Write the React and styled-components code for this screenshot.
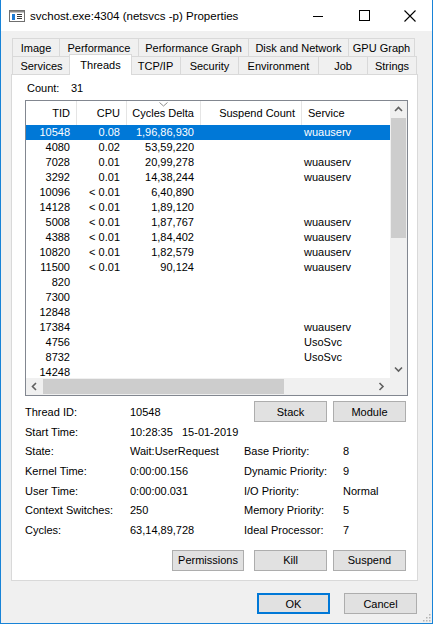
import React from 'react'
import styled, { createGlobalStyle, css } from 'styled-components'

const Global = createGlobalStyle`
  body {
    margin: 0;
    background: #fff;
  }
`

const topTabs = [
  { label: 'Image', w: 47 },
  { label: 'Performance', w: 79 },
  { label: 'Performance Graph', w: 110 },
  { label: 'Disk and Network', w: 100 },
  { label: 'GPU Graph', w: 67 },
]

const bottomTabs = [
  { label: 'Services', w: 58 },
  { label: 'Threads', w: 60, active: true },
  { label: 'TCP/IP', w: 50 },
  { label: 'Security', w: 58 },
  { label: 'Environment', w: 80 },
  { label: 'Job', w: 49 },
  { label: 'Strings', w: 50 },
]

const columns = [
  { label: 'TID', w: 51, align: 'right' },
  { label: 'CPU', w: 50, align: 'right' },
  { label: 'Cycles Delta', w: 74, align: 'right', sorted: true },
  { label: 'Suspend Count', w: 101, align: 'right' },
  { label: 'Service', w: 88, align: 'left' },
]

const threads = [
  ['10548', '0.08', '1,96,86,930', '', 'wuauserv'],
  ['4080', '0.02', '53,59,220', '', ''],
  ['7028', '0.01', '20,99,278', '', 'wuauserv'],
  ['3292', '0.01', '14,38,244', '', 'wuauserv'],
  ['10096', '< 0.01', '6,40,890', '', ''],
  ['14128', '< 0.01', '1,89,120', '', ''],
  ['5008', '< 0.01', '1,87,767', '', 'wuauserv'],
  ['4388', '< 0.01', '1,84,402', '', 'wuauserv'],
  ['10820', '< 0.01', '1,82,579', '', 'wuauserv'],
  ['11500', '< 0.01', '90,124', '', 'wuauserv'],
  ['820', '', '', '', ''],
  ['7300', '', '', '', ''],
  ['12848', '', '', '', ''],
  ['17384', '', '', '', 'wuauserv'],
  ['4756', '', '', '', 'UsoSvc'],
  ['8732', '', '', '', 'UsoSvc'],
  ['14248', '', '', '', ''],
]

const details = [
  ['State:', 'Wait:UserRequest', 'Base Priority:', '8'],
  ['Kernel Time:', '0:00:00.156', 'Dynamic Priority:', '9'],
  ['User Time:', '0:00:00.031', 'I/O Priority:', 'Normal'],
  ['Context Switches:', '250', 'Memory Priority:', '5'],
  ['Cycles:', '63,14,89,728', 'Ideal Processor:', '7'],
]

const gridTemplate = columns.map(c => `${c.w}px`).join(' ')

const Window = styled.div`
  position: relative;
  width: 433px;
  height: 624px;
  box-sizing: border-box;
  border: 1px solid #1883d7;
  border-top: none;
  display: flex;
  flex-direction: column;
  background: #f0f0f0;
  font-family: "Liberation Sans", Arial, sans-serif;
  font-size: 11px;
  color: #000;
  overflow: hidden;
`

const TitleBar = styled.div`
  height: 31px;
  flex: none;
  background: #fff;
  display: flex;
  align-items: center;
  padding-left: 8px;
`

const Title = styled.span`
  margin-left: 5px;
  font-size: 11.5px;
  flex: 1;
  white-space: nowrap;
`

const Caption = styled.div`
  width: ${p => p.$w || 46}px;
  height: 31px;
  display: flex;
  align-items: center;
  justify-content: center;
`

const Body = styled.div`
  flex: 1;
  display: flex;
  flex-direction: column;
  padding: 7px 14px 9px 10px;
`

const TabRow = styled.div`
  display: flex;
  height: 18px;
  padding-left: 1px;
`

const Tab = styled.div`
  box-sizing: border-box;
  width: ${p => p.$w}px;
  height: 18px;
  flex: none;
  border-top: 1px solid #d9d9d9;
  border-left: 1px solid #d9d9d9;
  background: #f0f0f0;
  display: flex;
  align-items: center;
  justify-content: center;
  white-space: nowrap;
  &:last-child {
    border-right: 1px solid #d9d9d9;
  }
  ${p => p.$active && css`
    position: relative;
    z-index: 1;
    width: ${p.$w + 3}px;
    height: 21px;
    margin: -2px -2px 0 -1px;
    background: #fff;
    border-right: 1px solid #d9d9d9;
  `}
`

const Panel = styled.div`
  box-sizing: border-box;
  height: 507px;
  flex: none;
  background: #fff;
  border: 1px solid #d9d9d9;
  display: flex;
  flex-direction: column;
  padding: 7px 9px 0 13px;
`

const CountRow = styled.div`
  display: flex;
  height: 13px;
  line-height: 13px;
  margin: 0 0 5px 2px;
`

const CountLabel = styled.span`
  width: 44px;
`

const ListBox = styled.div`
  box-sizing: border-box;
  height: 296px;
  border: 1px solid #828790;
  display: grid;
  grid-template-columns: 1fr 17px;
  grid-template-rows: 1fr 17px;
`

const ListContent = styled.div`
  overflow: hidden;
  background: #fff;
`

const HeaderRow = styled.div`
  display: grid;
  grid-template-columns: ${gridTemplate};
  height: 24px;
`

const HeaderCell = styled.div`
  position: relative;
  box-sizing: border-box;
  display: flex;
  align-items: center;
  justify-content: ${p => (p.$align === 'right' ? 'flex-end' : 'flex-start')};
  padding: ${p => (p.$align === 'right' ? '0 6px 0 0' : '0 0 0 6px')};
  border-right: 1px solid #e5e5e5;
  white-space: nowrap;
  &:last-child {
    border-right: none;
  }
`

const SortMark = styled.svg`
  position: absolute;
  top: 1px;
  left: 32px;
`

const Row = styled.div`
  display: grid;
  grid-template-columns: ${gridTemplate};
  height: 15px;
  line-height: 15px;
  ${p => p.$selected && css`
    background: #0078d7;
    color: #fff;
  `}
`

const Cell = styled.div`
  box-sizing: border-box;
  text-align: ${p => p.$align};
  padding: ${p => (p.$align === 'right' ? '0 7px 0 0' : '0 0 0 2px')};
  white-space: nowrap;
  overflow: hidden;
`

const VScroll = styled.div`
  display: flex;
  flex-direction: column;
  background: #f0f0f0;
`

const HScroll = styled.div`
  display: flex;
  background: #f0f0f0;
`

const Arrow = styled.div`
  width: 17px;
  height: 17px;
  flex: none;
  display: flex;
  align-items: center;
  justify-content: center;
`

const VThumb = styled.div`
  height: 120px;
  margin: 0 1px;
  background: #cdcdcd;
`

const HThumb = styled.div`
  width: 241px;
  margin: 1px 0;
  background: #cdcdcd;
`

const Spacer = styled.div`
  flex: 1;
`

const Corner = styled.div`
  background: #f0f0f0;
`

const DetailGrid = styled.div`
  display: grid;
  grid-template-columns: 105px 114px 99px 1fr;
  grid-auto-rows: 19.7px;
  align-items: center;
  margin-top: 6px;
  padding-right: 2px;
`

const Text = styled.div`
  white-space: nowrap;
`

const ButtonGroup = styled.div`
  grid-column: 3 / 5;
  display: flex;
  justify-content: flex-end;
  gap: 6px;
`

const Button = styled.div`
  box-sizing: border-box;
  width: ${p => p.$w || 73}px;
  height: 21px;
  flex: none;
  background: #e1e1e1;
  border: 1px solid #adadad;
  display: flex;
  align-items: center;
  justify-content: center;
  margin-right: ${p => p.$mr || 0}px;
  ${p => p.$default && css`
    border: 2px solid #0078d7;
  `}
`

const ActionRow = styled.div`
  display: flex;
  justify-content: flex-end;
  margin-top: 10px;
  padding-right: 2px;
`

const Footer = styled.div`
  display: flex;
  justify-content: flex-end;
  gap: 14px;
  margin-top: 12px;
  padding-right: 1px;
`

const Grip = styled.svg`
  position: absolute;
  right: 1px;
  bottom: 1px;
`

const Chevron = ({ dir }) => {
  const paths = {
    up: 'M1 5 L4.5 1.5 L8 5',
    down: 'M1 1.5 L4.5 5 L8 1.5',
    left: 'M5 1 L1.5 4.5 L5 8',
    right: 'M1.5 1 L5 4.5 L1.5 8',
  }
  const vertical = dir === 'up' || dir === 'down'
  return (
    <svg width={vertical ? 9 : 7} height={vertical ? 7 : 9}>
      <path d={paths[dir]} fill="none" stroke="#606060" strokeWidth="1.6" />
    </svg>
  )
}

const AppIcon = () => (
  <svg width="16" height="14" viewBox="0 0 16 14">
    <rect x="0.5" y="1.5" width="15" height="11" fill="#fff" stroke="#6f6f6f" />
    <rect x="1" y="2" width="14" height="1.5" fill="#8a8a8a" />
    <rect x="3" y="5" width="3" height="6" fill="#1c7ad4" />
    <rect x="8" y="5" width="5" height="1" fill="#3c3c3c" />
    <rect x="8" y="7" width="5" height="1" fill="#3c3c3c" />
    <rect x="8" y="9" width="5" height="1" fill="#3c3c3c" />
  </svg>
)

const App = () => {
  return (
    <Window>
      <Global />
      <TitleBar>
        <AppIcon />
        <Title>svchost.exe:4304 (netsvcs -p) Properties</Title>
        <Caption>
          <svg width="10" height="10">
            <path d="M0 5.5 H10" stroke="#000" strokeWidth="1" />
          </svg>
        </Caption>
        <Caption>
          <svg width="11" height="11">
            <rect x="0.5" y="0.5" width="10" height="10" fill="none" stroke="#000" strokeWidth="1" />
          </svg>
        </Caption>
        <Caption $w={45}>
          <svg width="12" height="12">
            <path d="M0.5 0.5 L11.5 11.5 M11.5 0.5 L0.5 11.5" stroke="#000" strokeWidth="1.1" />
          </svg>
        </Caption>
      </TitleBar>

      <Body>
        <TabRow>
          {topTabs.map(t => (
            <Tab key={t.label} $w={t.w}>{t.label}</Tab>
          ))}
        </TabRow>
        <TabRow>
          {bottomTabs.map(t => (
            <Tab key={t.label} $w={t.w} $active={t.active}>{t.label}</Tab>
          ))}
        </TabRow>

        <Panel>
          <CountRow>
            <CountLabel>Count:</CountLabel>
            <span>31</span>
          </CountRow>

          <ListBox>
            <ListContent>
              <HeaderRow>
                {columns.map(c => (
                  <HeaderCell key={c.label} $align={c.align}>
                    {c.sorted && (
                      <SortMark width="9" height="5">
                        <path d="M0.5 0.5 L4.5 4 L8.5 0.5" fill="none" stroke="#8c8c8c" strokeWidth="1" />
                      </SortMark>
                    )}
                    {c.label}
                  </HeaderCell>
                ))}
              </HeaderRow>
              {threads.map((r, i) => (
                <Row key={r[0]} $selected={i === 0}>
                  {columns.map((c, j) => (
                    <Cell key={c.label} $align={c.align}>{r[j]}</Cell>
                  ))}
                </Row>
              ))}
            </ListContent>
            <VScroll>
              <Arrow><Chevron dir="up" /></Arrow>
              <VThumb />
              <Spacer />
              <Arrow><Chevron dir="down" /></Arrow>
            </VScroll>
            <HScroll>
              <Arrow><Chevron dir="left" /></Arrow>
              <HThumb />
              <Spacer />
              <Arrow><Chevron dir="right" /></Arrow>
            </HScroll>
            <Corner />
          </ListBox>

          <DetailGrid>
            <Text>Thread ID:</Text>
            <Text>10548</Text>
            <ButtonGroup>
              <Button>Stack</Button>
              <Button>Module</Button>
            </ButtonGroup>
            <Text>Start Time:</Text>
            <Text>10:28:35&nbsp;&nbsp;&nbsp;15-01-2019</Text>
            <Text />
            <Text />
            {details.map(d => (
              <React.Fragment key={d[0]}>
                <Text>{d[0]}</Text>
                <Text>{d[1]}</Text>
                <Text>{d[2]}</Text>
                <Text>{d[3]}</Text>
              </React.Fragment>
            ))}
          </DetailGrid>

          <ActionRow>
            <Button $w={72} $mr={10}>Permissions</Button>
            <Button $mr={6}>Kill</Button>
            <Button>Suspend</Button>
          </ActionRow>
        </Panel>

        <Footer>
          <Button $default>OK</Button>
          <Button>Cancel</Button>
        </Footer>
      </Body>

      <Grip width="10" height="10">
        {[[8, 2], [5, 5], [8, 5], [2, 8], [5, 8], [8, 8]].map(([x, y]) => (
          <rect key={`${x}-${y}`} x={x} y={y} width="1.5" height="1.5" fill="#b4b4b4" />
        ))}
      </Grip>
    </Window>
  )
}

export default App
